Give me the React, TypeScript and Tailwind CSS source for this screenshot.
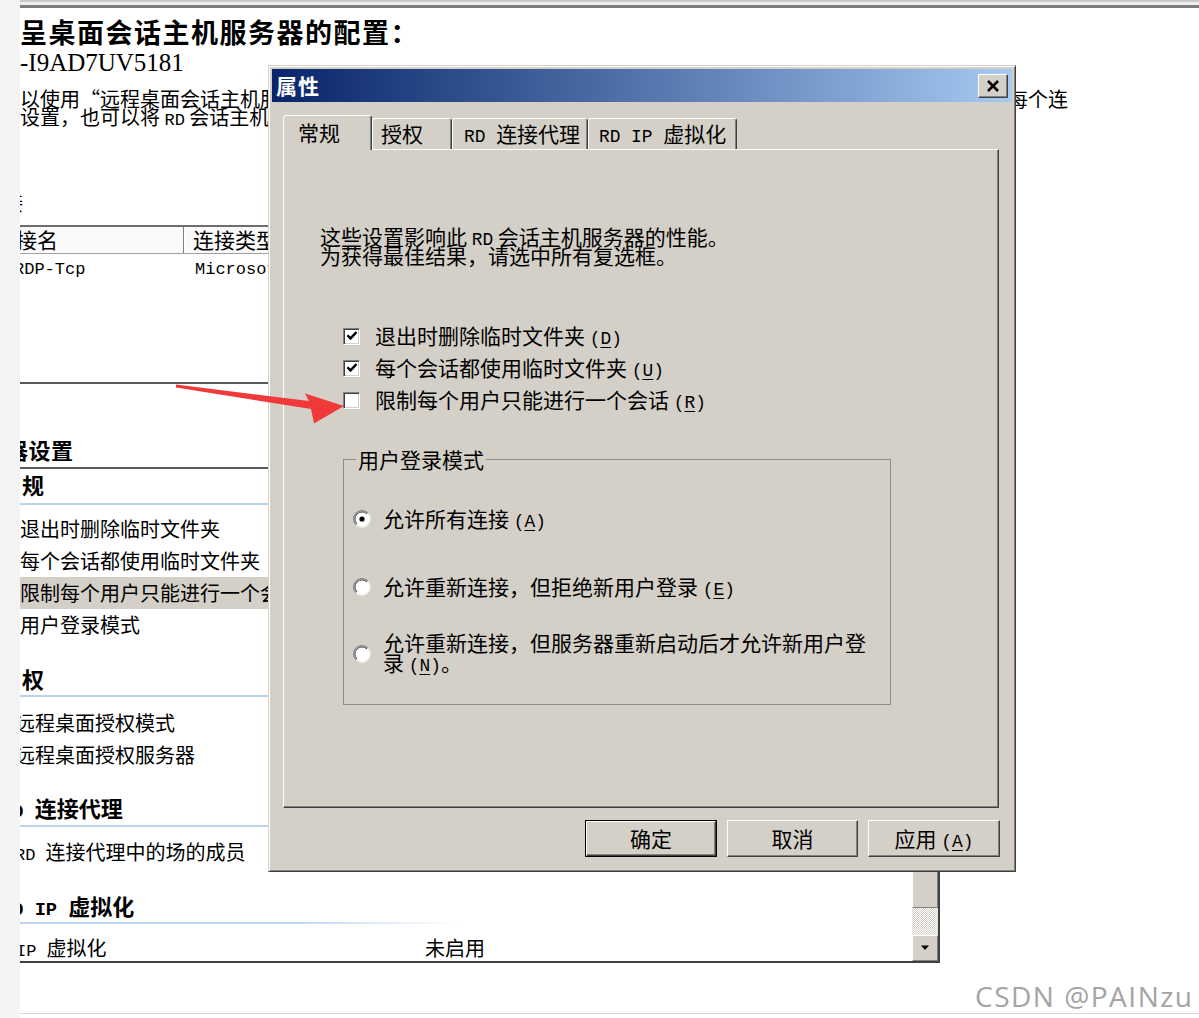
import type { ReactNode } from "react";

// ─── Classic Windows bits ───────────────────────────────────────────────────────

function Latin({ children }: { children: ReactNode }) {
  return (
    <span className="font-['Liberation_Mono',monospace] text-[0.85em] leading-none">
      {children}
    </span>
  );
}

function Key({ k }: { k: string }) {
  return (
    <Latin>
      (<span className="underline underline-offset-[3px]">{k}</span>)
    </Latin>
  );
}

function Check({ checked = false }: { checked?: boolean }) {
  return (
    <span className="w-[17px] h-[17px] shrink-0 flex items-center justify-center bg-white border border-t-[#808080] border-l-[#808080] border-r-white border-b-white shadow-[inset_1px_1px_0_#404040,inset_-1px_-1px_0_#d4d0c8]">
      {checked && (
        <svg width="12" height="12" viewBox="0 0 12 12">
          <path d="M1.5 5.2 L4.5 8.4 L10.5 2.2" fill="none" stroke="#000" strokeWidth="2.4" />
        </svg>
      )}
    </span>
  );
}

function Radio({ on = false }: { on?: boolean }) {
  return (
    <svg width="18" height="18" viewBox="0 0 18 18" className="shrink-0">
      <circle cx="9" cy="9" r="8.3" fill="#ffffff" />
      <path d="M3.1 14.9 A8.3 8.3 0 0 1 14.9 3.1" fill="none" stroke="#808080" strokeWidth="1.2" />
      <path d="M4 14 A7 7 0 0 1 14 4" fill="none" stroke="#404040" strokeWidth="1" />
      <path d="M14.9 3.1 A8.3 8.3 0 0 1 3.1 14.9" fill="none" stroke="#ece9e2" strokeWidth="1.2" />
      {on && <circle cx="9" cy="9" r="2.6" fill="#000" />}
    </svg>
  );
}

function Btn({ children, w, def = false }: { children: ReactNode; w: string; def?: boolean }) {
  return (
    <button
      className={`${w} h-[37px] p-0 bg-[#d4d0c8] text-[21px] ${def ? "border border-black" : ""}`}
    >
      <span className="flex h-full w-full items-center justify-center border border-t-white border-l-white border-r-[#404040] border-b-[#404040] shadow-[inset_-1px_-1px_0_#808080]">
        <span>{children}</span>
      </span>
    </button>
  );
}

const ROW = "h-[32px] flex items-center text-[20px] whitespace-nowrap";
const HEAD = "h-[24px] flex items-center text-[22px] font-bold whitespace-nowrap";
const BLUE = "h-[2px] w-[440px] bg-linear-to-r from-[#bcd3ee] from-60% to-transparent";
const TAB =
  "h-[31px] mb-[1px] flex items-center rounded-t-[3px] border-t border-l border-t-white border-l-white border-r border-r-[#404040] shadow-[inset_-1px_0_0_#808080]";

// ─── Page ───────────────────────────────────────────────────────────────────────

export default function App() {
  return (
    <div className="relative w-[1199px] h-[1018px] overflow-hidden bg-white text-black font-['Noto_Sans_CJK_SC',sans-serif]">
      <div className="flex h-full">
        <div className="w-[20px] shrink-0 bg-[#f4f4f4]" />

        {/* Background: RD session host configuration page */}
        <div className="flex-1 min-w-0 overflow-hidden flex flex-col">
          <div className="h-[2px] bg-[#c8c8c8]" />
          <div className="h-[3px] bg-[#eeeeee]" />
          <div className="h-[3px] bg-[#7a7a7a]" />

          <div className="mt-[9px] h-[30px] leading-[30px] text-[27px] font-bold tracking-[1.5px] whitespace-nowrap">
            呈桌面会话主机服务器的配置：
          </div>
          <div className="mt-[2px] h-[28px] leading-[28px] text-[25px] font-['Liberation_Serif',serif] whitespace-nowrap">
            -I9AD7UV5181
          </div>

          <div className="mt-[13px] text-[20px] leading-[18px] whitespace-nowrap">
            <div className="h-[18px] flex w-[1048px] justify-between">
              <span>以使用“远程桌面会话主机服务器配置”来配置</span>
              <span>每个连</span>
            </div>
            <div className="h-[18px]">
              设置，也可以将 <Latin>RD</Latin> 会话主机服务器配置
            </div>
          </div>

          <div className="mt-[68px] h-[18px] leading-[18px] text-[20px] whitespace-nowrap">
            <span className="-ml-[17px]">接</span>
          </div>

          {/* Connections table */}
          <div className="mt-[13px] w-[920px] h-[29px] flex items-center bg-[#fafafa] border-t-2 border-t-[#6e6e6e] border-b border-b-[#a0a0a0] text-[21px] whitespace-nowrap">
            <div className="w-[163px] h-full flex items-center">
              <span className="-ml-[25px]">连接名</span>
            </div>
            <div className="h-full w-[2px] border-l border-l-[#808080] border-r border-r-white" />
            <div className="pl-[8px]">连接类型</div>
          </div>
          <div className="h-[32px] flex items-center text-[17px] font-['Liberation_Mono',monospace] whitespace-nowrap">
            <div className="w-[165px]">
              <span className="-ml-[6px]">RDP-Tcp</span>
            </div>
            <div className="pl-[10px]">Microsoft RDP 6.1</div>
          </div>

          <div className="mt-[96px] w-[920px] h-[2px] bg-[#5a5a5a]" />

          {/* Settings list */}
          <div className="flex w-[920px] border-b-2 border-b-[#404040]">
            <div className="flex-1 min-w-0 flex flex-col">
              <div className="mt-[53px] h-[25px] flex items-center text-[22px] font-bold tracking-[0.5px] whitespace-nowrap">
                <span className="-ml-[14px]">器</span>设置
              </div>
              <div className="mt-[5px] h-[2px] bg-[#5a5a5a]" />

              <div className={`mt-[3px] ${HEAD} pl-[2px]`}>规</div>
              <div className={`mt-[7px] ${BLUE}`} />
              <div className="mt-[8px] flex flex-col">
                <div className={ROW}>退出时删除临时文件夹</div>
                <div className={ROW}>每个会话都使用临时文件夹</div>
                <div className={`${ROW} w-[400px] bg-[#d4d0c8]`}>限制每个用户只能进行一个会话</div>
                <div className={ROW}>用户登录模式</div>
              </div>

              <div className={`mt-[25px] ${HEAD} pl-[2px]`}>权</div>
              <div className={`mt-[5px] ${BLUE}`} />
              <div className="mt-[10px] flex flex-col">
                <div className={ROW}>
                  <span className="-ml-[5px]">远程桌面授权模式</span>
                </div>
                <div className={ROW}>
                  <span className="-ml-[5px]">远程桌面授权服务器</span>
                </div>
              </div>

              <div className={`mt-[24px] ${HEAD}`}>
                <span className="-ml-[19px]">
                  <Latin>RD </Latin>连接代理
                </span>
              </div>
              <div className={`mt-[6px] ${BLUE}`} />
              <div className={`mt-[9px] ${ROW}`}>
                <span className="-ml-[5px]">
                  <Latin>RD </Latin>连接代理中的场的成员
                </span>
              </div>

              <div className={`mt-[25px] ${HEAD}`}>
                <span className="-ml-[19px]">
                  <Latin>RD IP </Latin>虚拟化
                </span>
              </div>
              <div className={`mt-[5px] ${BLUE}`} />
              <div className="mt-[11px] h-[26px] flex items-center text-[20px] whitespace-nowrap">
                <div className="w-[405px]">
                  <span className="-ml-[4px]">
                    <Latin>IP </Latin>虚拟化
                  </span>
                </div>
                <div>未启用</div>
              </div>
            </div>

            {/* Scrollbar */}
            <div className="w-[28px] flex flex-col border-r-2 border-r-[#404040]">
              <div className="flex-1 bg-[#d4d0c8] border border-t-white border-l-white border-r-[#808080] border-b-[#808080]" />
              <div className="h-[27px] bg-[repeating-conic-gradient(#d4d0c8_0%_25%,#ffffff_0%_50%)] bg-[length:2px_2px]" />
              <div className="h-[26px] flex items-center justify-center bg-[#d4d0c8] border border-t-white border-l-white border-r-[#808080] border-b-[#808080]">
                <svg width="10" height="6" viewBox="0 0 10 6">
                  <path d="M1 0.5 H9 L5 5 Z" fill="#000" />
                </svg>
              </div>
            </div>
          </div>

          <div className="mt-[50px] h-[1px] bg-[#d8d8d8]" />
        </div>
      </div>

      {/* Properties dialog */}
      <div className="absolute left-[268px] top-[65px] w-[748px] h-[807px] flex flex-col p-[3px] bg-[#d4d0c8] border border-t-[#d4d0c8] border-l-[#d4d0c8] border-r-[#404040] border-b-[#404040] shadow-[inset_1px_1px_0_#ffffff,inset_-1px_-1px_0_#808080]">
        <div className="h-[33px] flex items-center pl-[4px] pr-[4px] bg-linear-to-r from-[#0a246a] to-[#a6caf0]">
          <span className="text-[21px] font-bold text-white tracking-[1px]">属性</span>
          <div className="ml-auto w-[30px] h-[24px] flex items-center justify-center bg-[#d4d0c8] border border-t-white border-l-white border-r-[#404040] border-b-[#404040] shadow-[inset_-1px_-1px_0_#808080]">
            <svg width="14" height="12" viewBox="0 0 14 12">
              <path d="M2 1 L12 11 M12 1 L2 11" stroke="#000" strokeWidth="2.6" />
            </svg>
          </div>
        </div>

        {/* Tabs */}
        <div className="mt-[13px] ml-[11px] mr-[13px] relative z-10 -mb-[1px] h-[35px] flex items-end text-[21px] whitespace-nowrap">
          <div className="w-[89px] h-[35px] flex items-center pl-[14px] bg-[#d4d0c8] rounded-t-[3px] border-t border-l border-t-white border-l-white border-r border-r-[#404040] shadow-[inset_-1px_0_0_#808080]">
            <span>常规</span>
          </div>
          <div className={`w-[80px] pl-[8px] ${TAB}`}>
            <span>授权</span>
          </div>
          <div className={`w-[136px] pl-[11px] ${TAB}`}>
            <span>
              <Latin>RD </Latin>连接代理
            </span>
          </div>
          <div className={`w-[149px] pl-[10px] ${TAB}`}>
            <span>
              <Latin>RD IP </Latin>虚拟化
            </span>
          </div>
        </div>

        {/* Tab panel */}
        <div className="ml-[11px] mr-[13px] h-[659px] flex flex-col border border-t-white border-l-white border-r-[#404040] border-b-[#404040] shadow-[inset_-1px_-1px_0_#808080]">
          <div className="mt-[77px] ml-[36px] text-[21px] leading-[19px] whitespace-nowrap">
            <div className="h-[19px]">
              这些设置影响此 <Latin>RD</Latin> 会话主机服务器的性能。
            </div>
            <div className="h-[19px]">为获得最佳结果，请选中所有复选框。</div>
          </div>

          <div className="mt-[55px] ml-[59px] flex flex-col text-[21px] whitespace-nowrap">
            <div className="h-[32px] flex items-center gap-[15px]">
              <Check checked />
              <span>
                退出时删除临时文件夹 <Key k="D" />
              </span>
            </div>
            <div className="h-[32px] flex items-center gap-[15px]">
              <Check checked />
              <span>
                每个会话都使用临时文件夹 <Key k="U" />
              </span>
            </div>
            <div className="h-[32px] flex items-center gap-[15px]">
              <Check />
              <span>
                限制每个用户只能进行一个会话 <Key k="R" />
              </span>
            </div>
          </div>

          <fieldset className="mt-[32px] ml-[59px] w-[548px] h-[257px] border border-[#8c8c8c] text-[21px] whitespace-nowrap">
            <legend className="ml-[12px] px-[2px] leading-[22px]">用户登录模式</legend>
            <div className="mt-[33px] pl-[9px] h-[32px] flex items-center gap-[12px]">
              <Radio on />
              <span>
                允许所有连接 <Key k="A" />
              </span>
            </div>
            <div className="mt-[36px] pl-[9px] h-[32px] flex items-center gap-[12px]">
              <Radio />
              <span>
                允许重新连接，但拒绝新用户登录 <Key k="E" />
              </span>
            </div>
            <div className="mt-[31px] pl-[9px] h-[40px] flex items-center gap-[12px]">
              <Radio />
              <span className="leading-[20px]">
                允许重新连接，但服务器重新启动后才允许新用户登
                <br />录 <Key k="N" />。
              </span>
            </div>
          </fieldset>
        </div>

        {/* Buttons */}
        <div className="mt-[12px] mr-[12px] flex justify-end gap-[10px]">
          <Btn w="w-[132px]" def>
            确定
          </Btn>
          <Btn w="w-[131px]">取消</Btn>
          <Btn w="w-[132px]">
            应用 <Key k="A" />
          </Btn>
        </div>
      </div>

      {/* Red annotation arrow */}
      <svg
        className="absolute left-[170px] top-[378px] pointer-events-none"
        width="180"
        height="50"
        viewBox="170 378 180 50"
      >
        <path
          d="M176 384.6 L309 401 L305 393.5 L344 406 L314 423.5 L311 409 L176 387.4 Z"
          fill="#f03a3a"
        />
      </svg>

      {/* Watermark */}
      <div className="absolute left-[975px] top-[982px] text-[28px] leading-none tracking-[1.5px] text-[#a4a4a4] whitespace-nowrap font-['Open_Sans',sans-serif]">
        CSDN @PAINzu
      </div>
    </div>
  );
}
